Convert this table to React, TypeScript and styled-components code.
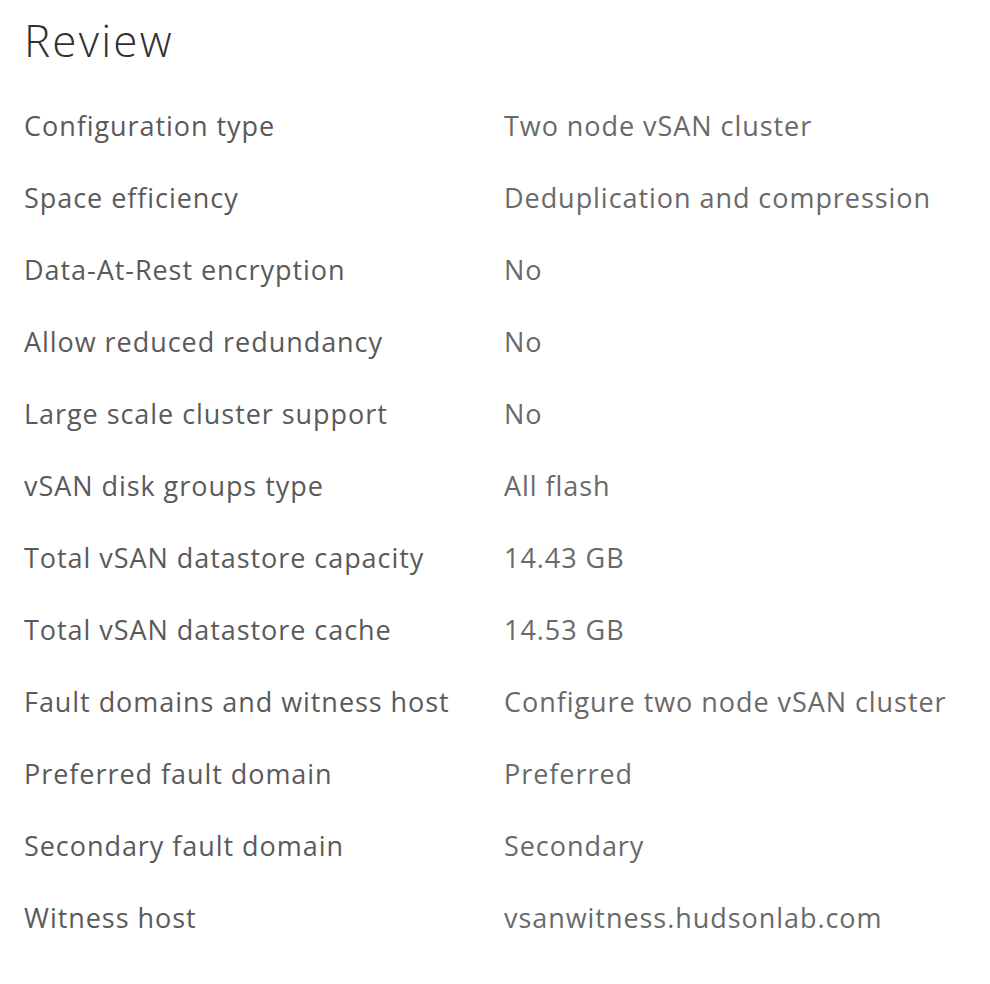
import React from "react";
import styled, { createGlobalStyle } from "styled-components";

const Global = createGlobalStyle`
  html, body { margin: 0; padding: 0; background: #ffffff; }
  body { font-family: "Open Sans", "Noto Sans", sans-serif; }
`;

const Page = styled.div`
  width: 990px;
  height: 984px;
  padding: 14px 24px 0 24px;
  box-sizing: border-box;
  background: #ffffff;
`;

const Title = styled.h2`
  margin: 0;
  font-size: 44px;
  font-weight: 300;
  color: #313131;
  line-height: 52px;
  letter-spacing: 2.2px;
`;

const Grid = styled.div`
  display: grid;
  grid-template-columns: 480px 1fr;
  grid-auto-rows: 72px;
  margin-top: 24px;
`;

const Label = styled.div`
  font-size: 27px;
  color: #5a5a5a;
  line-height: 72px;
  height: 72px;
  display: flex;
  align-items: center;
  white-space: nowrap;
  letter-spacing: 0.95px;
`;

const Value = styled(Label)`
  color: #696969;
`;

const rows: [string, string][] = [
  ["Configuration type", "Two node vSAN cluster"],
  ["Space efficiency", "Deduplication and compression"],
  ["Data-At-Rest encryption", "No"],
  ["Allow reduced redundancy", "No"],
  ["Large scale cluster support", "No"],
  ["vSAN disk groups type", "All flash"],
  ["Total vSAN datastore capacity", "14.43 GB"],
  ["Total vSAN datastore cache", "14.53 GB"],
  ["Fault domains and witness host", "Configure two node vSAN cluster"],
  ["Preferred fault domain", "Preferred"],
  ["Secondary fault domain", "Secondary"],
  ["Witness host", "vsanwitness.hudsonlab.com"],
];

export default function App() {
  return (
    <Page>
      <Global />
      <Title>Review</Title>
      <Grid>
        {rows.map(([k, v]) => (
          <React.Fragment key={k}>
            <Label>{k}</Label>
            <Value>{v}</Value>
          </React.Fragment>
        ))}
      </Grid>
    </Page>
  );
}
